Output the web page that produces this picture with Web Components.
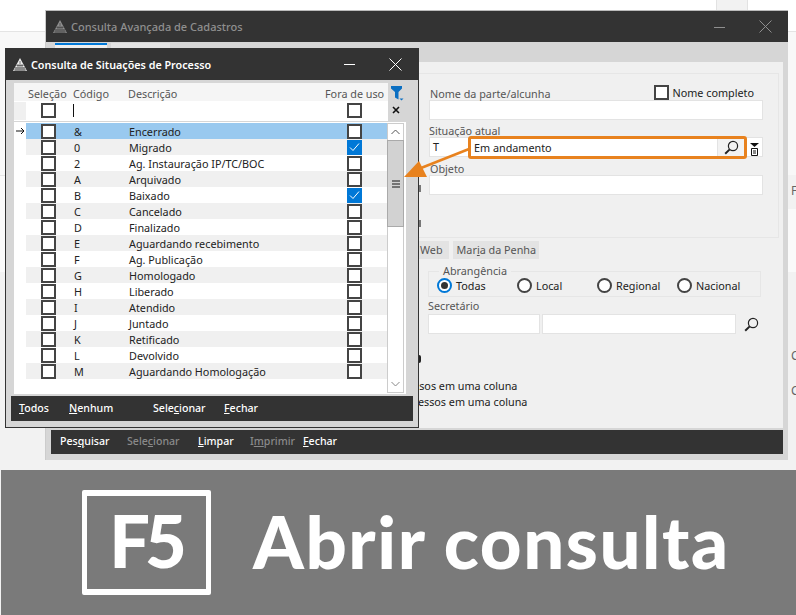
<!DOCTYPE html>
<html lang="pt"><head><meta charset="utf-8"><title>Abrir consulta</title>
<style>
html,body{margin:0;padding:0}
body{width:796px;height:615px;overflow:hidden;background:#fff;position:relative;font:10.8px "Noto Sans",sans-serif;color:#222}
</style></head><body>
<x-app></x-app>
<script>
const LOGO=c=>`<svg width="14" height="13" viewBox="0 0 14 13" style="display:block"><path d="M7 0 14 13H0Z" fill="${c}"/><path d="M7 3V13M5 6V13M9 6V13M3 9V13M11 9V13M3.500 7.500H10.500M2.200 10H11.800M1 12H13" stroke="#444" stroke-width=".7" fill="none"/></svg>`;
const LENS=`<svg width="15" height="15" viewBox="0 0 15 15" style="display:block"><circle cx="9" cy="6" r="4.6" fill="none" stroke="#222" stroke-width="1.2"/><path d="M5.700 9.400 1.200 13.800" stroke="#222" stroke-width="2" fill="none"/></svg>`;

class XCheck extends HTMLElement{
  connectedCallback(){
    const on=this.hasAttribute('checked');
    this.attachShadow({mode:'open'}).innerHTML=`<style>
    :host{display:block;width:15px;height:15px;box-sizing:border-box;border:2px solid ${on?'#0078d7':'#444'};background:${on?'#0078d7':'#fff'}}
    svg{display:block}</style>${on?'<svg width="11" height="11" viewBox="0 0 11 11"><path d="M1 5.500 4 8.500 10 1.500" fill="none" stroke="#fff" stroke-width="1"/></svg>':''}`;
  }
}
class XRadio extends HTMLElement{
  connectedCallback(){
    const on=this.hasAttribute('checked');
    this.attachShadow({mode:'open'}).innerHTML=`<style>
    :host{display:flex;align-items:center;gap:4px;width:80px;height:16px;color:#222}
    i{display:block;width:15px;height:15px;box-sizing:border-box;border-radius:50%;border:2px solid ${on?'#0078d7':'#444'};background:#fff;flex:none}
    b{display:${on?'block':'none'};width:7px;height:7px;border-radius:50%;background:#333;margin:2px}
    </style><i><b></b></i><span><slot></slot></span>`;
  }
}
class XWindow extends HTMLElement{
  connectedCallback(){
    const back=this.hasAttribute('inactive');
    const col=back?'#8f8f8f':'#fff';
    this.attachShadow({mode:'open'}).innerHTML=`<style>
    :host{display:flex;flex-direction:column;position:absolute;box-sizing:border-box;background:#d6d6d6}
    header{flex:none;display:flex;align-items:center;background:#333;color:${col};height:${back?31:32}px;font-weight:${back?500:600};font-size:${back?11:10.75}px}
    .logo{margin:0 4px 0 7px;flex:none}
    .t{flex:1;white-space:nowrap;padding-top:${back?0:2}px}
    .c{flex:none;display:flex;align-items:center;gap:34px;padding-right:16px}
    svg{display:block}
    main{flex:1;display:flex;flex-direction:column;min-height:0}
    </style><header><span class="logo">${LOGO(back?'#8f8f8f':'#eee')}</span><span class="t"><slot name="title"></slot></span>
    <span class="c"><svg width="11" height="12" viewBox="0 0 11 12"><path d="M0 6.500H11" stroke="${col}"/></svg>
    <svg width="13" height="13" viewBox="0 0 13 13"><path d="M.5.5 12.500 12.500M12.500.5.5 12.500" stroke="${col}" stroke-width="1"/></svg></span></header><main><slot></slot></main>`;
  }
}
class XBar extends HTMLElement{
  connectedCallback(){
    this.attachShadow({mode:'open'}).innerHTML=`<style>
    :host{display:flex;align-items:center;background:#333;color:#fff;font-weight:500;font-size:10.6px;white-space:nowrap;padding-bottom:2px;box-sizing:border-box}
    </style><slot></slot>`;
  }
}
class XField extends HTMLElement{
  connectedCallback(){
    this.attachShadow({mode:'open'}).innerHTML=`<style>
    :host{display:block;box-sizing:border-box;background:#fff;border:1px solid #e3e3e3;height:20px;line-height:18px;padding-left:3px;color:#222;white-space:nowrap}
    </style><slot></slot>`;
  }
}
class XGrid extends HTMLElement{
  connectedCallback(){
    const rows=[['&','Encerrado'],['0','Migrado',1],['2','Ag. Instauração IP/TC/BOC'],['A','Arquivado'],['B','Baixado',1],['C','Cancelado'],['D','Finalizado'],['E','Aguardando recebimento'],['F','Ag. Publicação'],['G','Homologado'],['H','Liberado'],['I','Atendido'],['J','Juntado'],['K','Retificado'],['L','Devolvido'],['M','Aguardando Homologação']];
    const html=rows.map((r,i)=>`<div class="row ${i==0?'sel':i%2?'alt':''}"><span class="ind">${i==0?'<svg width="9" height="8" viewBox="0 0 9 8"><path d="M0 4H8M5 1 8 4 5 7" fill="none" stroke="#111"/></svg>':''}</span><span class="c1"><x-check></x-check></span><span class="c2">${r[0]}</span><span class="c3">${r[1]}</span><span class="c4"><x-check ${r[2]?'checked':''}></x-check></span></div>`).join('');
    this.attachShadow({mode:'open'}).innerHTML=`<style>
    :host{display:flex;flex-direction:column;flex:none;color:#222}
    .top{display:flex;height:38px}
    .hd{width:374px;background:#fff;box-sizing:border-box}
    .hdr{display:flex;align-items:center;height:18px;background:#f5f5f5;color:#555;padding-top:2px;box-sizing:border-box;white-space:nowrap}
    .filter{display:flex;align-items:center;height:19px}
    .stub{width:12px;height:18px;background:#f0f0f0;flex:none}
    .caret{width:1px;height:13px;background:#111;flex:none}
    .tools{flex:none;display:flex;flex-direction:column;align-items:center;width:18px}
    .main{display:flex;width:392px;height:272px;background:#fff;margin-top:1px;box-sizing:border-box;padding-top:1px}
    .list{width:373px;flex:none}
    .row{display:flex;align-items:center;height:16px;white-space:nowrap}
    .row.alt{background:linear-gradient(90deg,#fff 12px,#f0f0f0 12px)}
    .row.sel{background:linear-gradient(90deg,#fff 12px,#99c9ef 12px)}
    .ind{width:12px;flex:none;display:flex;justify-content:center}
    .c1{width:48px;flex:none;padding-left:15px;box-sizing:border-box}
    .c2{width:55px;flex:none}
    .c3{width:218px;flex:none}
    .c4{flex:none}
    .sb{width:17px;flex:none;height:270px;display:flex;flex-direction:column;border:1px solid #ccc;box-sizing:border-box;background:#fff}
    .btn{height:16px;flex:none;display:flex;align-items:center;justify-content:center;background:#fff}
    .th{height:87px;flex:none;background:#d2d2d2;border:1px solid #aaa;box-sizing:border-box;margin:0 -1px;display:flex;align-items:center;justify-content:center}
    .sp{flex:1}
    .h1{width:59px;padding-left:14px;box-sizing:border-box}.h2{width:55px}.h3{width:197px}.h4{flex:1}
    </style>
    <div class="top"><div class="hd">
      <div class="hdr"><span class="h1">Seleção</span><span class="h2">Código</span><span class="h3">Descrição</span><span class="h4">Fora de uso</span></div>
      <div class="filter"><span class="stub"></span><span style="width:15px;flex:none"></span><x-check></x-check><span style="width:17px;flex:none"></span><span class="caret"></span><span style="width:273px;flex:none"></span><x-check></x-check></div>
    </div><div class="tools">
      <svg width="13" height="15" viewBox="0 0 13 15" style="margin-top:3px;display:block"><path d="M0 0H11V2.500L7.500 6V13.500L4 11.500V6L0 2.500Z" fill="#0b6fc2"/><path d="M8.500 12.500H12.500L10.500 14.500Z" fill="#0b6fc2"/></svg>
      <svg width="8" height="8" viewBox="0 0 8 8" style="margin:5px 2px 0 0;display:block"><path d="M1 1 7 7M7 1 1 7" stroke="#111" stroke-width="1.6"/></svg>
    </div></div>
    <div class="main"><div class="list">${html}</div>
    <div class="sb"><div class="btn"><svg width="9" height="6" viewBox="0 0 9 6"><path d="M.5 5 4.500 1 8.500 5" fill="none" stroke="#555"/></svg></div>
    <div class="th"><svg width="8" height="8" viewBox="0 0 8 8"><path d="M0 1H8M0 4H8M0 7H8" stroke="#555" stroke-width="1.3"/></svg></div><div class="sp"></div>
    <div class="btn"><svg width="9" height="6" viewBox="0 0 9 6"><path d="M.5 1 4.500 5 8.500 1" fill="none" stroke="#888"/></svg></div></div></div>`;
  }
}
class XForm extends HTMLElement{
  connectedCallback(){
    this.attachShadow({mode:'open'}).innerHTML=`<style>
    :host{display:block;flex:1;background:#f0f0f0;color:#555;position:relative;overflow:hidden;margin:20px 5px 2px 0}
    .group{margin:11px 4px 0 0;height:165px;border:1px solid #e6e6e6;border-left:0;box-sizing:border-box;padding:0 15px 0 383px}
    .lbl{white-space:nowrap}
    .r1{display:flex;justify-content:space-between;align-items:flex-end;height:26px}
    .nc{display:flex;align-items:center;gap:4px;color:#222;margin-right:9px;line-height:13px}
    .tabs{display:flex;gap:4px;padding-left:345px;margin-top:3px;height:18px;line-height:17px;white-space:nowrap}
    .tabs span{background:#e3e3e3;box-sizing:border-box}
    .tabs .w{padding:0 6px 0 29px}.tabs .m{padding:0 4px;width:86px}
    .fs{margin:12px 0 0 382px;width:333px;height:26px;box-sizing:border-box;border:1px solid #e6e6e6;padding:2px 0 0 8px;display:flex;position:relative;align-items:center}
    .fs em{position:absolute;left:10px;top:-9px;background:#f0f0f0;padding:0 4px;font-style:normal;line-height:15px;height:15px}
    .lines{margin:44px 0 0 368px;color:#222;white-space:nowrap;line-height:16px}
    .tick{position:absolute;left:373px;width:2px;background:#777}
    </style>
    <div class="group">
      <div class="r1"><span class="lbl" style="padding-left:1px;line-height:21px;height:17px">Nome da parte/alcunha</span><span class="nc"><x-check></x-check><span>Nome completo</span></span></div>
      <x-field></x-field>
      <div class="lbl" style="margin-top:1px;height:16px;line-height:20px">Situação atual</div>
      <div style="display:flex;height:20px"><x-field style="flex:1;color:#222">T</x-field></div>
      <div class="lbl" style="height:18px;line-height:24px;padding-left:1px">Objeto</div>
      <x-field></x-field>
    </div>
    <div class="tabs"><span class="w">Web</span><span class="m">Mar<u>i</u>a da Penha</span></div>
    <div class="fs"><em>Abrangência</em><x-radio checked>Todas</x-radio><x-radio>Local</x-radio><x-radio>Regional</x-radio><x-radio>Nacional</x-radio></div>
    <div style="margin:1px 0 0 382px;height:16px;line-height:15px">Secretário</div>
    <div style="margin-left:382px;display:flex;gap:2px;align-items:center;height:20px"><x-field style="width:112px"></x-field><x-field style="width:194px"></x-field><span style="margin-left:6px">${LENS}</span></div>
    <div class="lines"><div>ssos em uma coluna</div><div>tessos em uma coluna</div></div>
    <i class="tick" style="top:123px;height:7px"></i><i class="tick" style="top:158px;height:7px"></i>
    <i class="tick" style="top:293px;height:8px;background:#222;border-radius:0 3px 3px 0"></i>`;
  }
}
class XApp extends HTMLElement{
  connectedCallback(){
    this.attachShadow({mode:'open'}).innerHTML=`<style>
    :host{display:flex;flex-direction:column;width:796px;height:615px;font:10.8px "Noto Sans",sans-serif;background:#f2f2f2;position:relative;overflow:hidden}
    .top{height:470px;flex:none;position:relative;background:linear-gradient(#fff 0 31px,#e4e4e4 31px 32px,#f8f8f8 32px 175px,#e6e6e6 175px 176px,#fafafa 176px 272px,#f2f2f2 272px)}
    .stub{position:absolute;left:716px;top:0;width:32px;height:11px;background:#f2f2f2;border:1px solid #e2e2e2;border-top:0;box-sizing:border-box}
    .side{position:absolute;left:788px;top:175px;width:8px;height:34px;background:#f2f2f2;color:#666;font-size:12px;line-height:32px;white-space:nowrap;overflow:hidden;padding-left:3px;box-sizing:border-box}
    .sc{position:absolute;left:791px;width:5px;overflow:hidden;color:#666;font-size:12px;line-height:14px}
    .banner{flex:1;margin-left:1px;background:#7a7a7a;color:#fff;display:flex;align-items:center;padding-left:81px}
    .key{box-sizing:border-box;width:129px;height:105px;border:solid #fff;border-width:6px 5px;border-radius:2px;padding:0 2px 6px 0;display:flex;align-items:center;justify-content:center;font:900 72px/1 Lato,sans-serif;letter-spacing:-5px}
    .ttl{font:900 72.500px/1 Lato,sans-serif;margin:0 0 2px 42px;white-space:nowrap;letter-spacing:1.550px}
    .hl{position:absolute;left:468px;top:136px;width:279px;height:23px;box-sizing:border-box;border:3px solid #e8821e;border-radius:3px;background:#fff;display:flex;align-items:center;color:#222;padding-left:3px;line-height:15px}
    .hl span{flex:1;padding-bottom:1px}
    .hl i{flex:none;width:26px;height:17px;background:#f2f2f2;border-left:1px solid #e3e3e3;display:flex;align-items:center;justify-content:center}
    </style>
    <div class="top">
      <div class="stub"></div>
      <div class="side">F</div><div class="sc" style="top:349px">C</div><div class="sc" style="top:384px">C</div>
      <x-window inactive style="left:45px;top:10px;width:743px;height:450px;border-top:1px solid #bbb;border-left:1px solid #ccc">
        <span slot="title">Consulta Avançada de Cadastros</span>
        <div style="position:absolute;left:9px;top:32px;width:52px;height:20px;background:#f0f0f0;border-top:2px solid #0078d7;box-sizing:border-box"></div>
        <div style="position:absolute;left:65px;top:32px;width:59px;height:20px;background:#e3e3e3"></div>
        <x-form></x-form>
        <x-bar style="height:24px;margin:0 5px 6px 5px;flex:none;padding-left:9px">
          <span style="width:67px">Pes<u>q</u>uisar</span><span style="width:71px;color:#8a8a8a">Sele<u>c</u>ionar</span><span style="width:52px"><u>L</u>impar</span><span style="width:53px;color:#8a8a8a">I<u>m</u>primir</span><span><u>F</u>echar</span>
        </x-bar>
      </x-window>
      <div class="hl"><span>Em andamento</span><i>${LENS}</i></div>
      <svg style="position:absolute;left:750px;top:143px" width="9" height="13" viewBox="0 0 9 13"><path d="M0 0H9L4.500 4Z" fill="#111"/><path d="M1.500 5.500H7.500V12.500H1.500ZM3 8H6M3 10H6" fill="#fff" stroke="#111"/></svg>
      <x-window style="left:5px;top:48px;width:414px;height:380px;border:1px solid #333;border-top:0">
        <span slot="title">Consulta de Situações de Processo</span>
        <x-grid style="margin:3px 0 0 8px"></x-grid>
        <x-bar style="height:25px;margin:2px 5px 0 5px;padding-left:8px;flex:none">
          <span style="width:50px"><u>T</u>odos</span><span style="width:84px"><u>N</u>enhum</span><span style="width:71px">Sele<u>c</u>ionar</span><span><u>F</u>echar</span>
        </x-bar>
      </x-window>
      <svg style="position:absolute;left:400px;top:145px" width="75" height="40" viewBox="0 0 75 40"><path d="M69 4 16 25" stroke="#e8821e" stroke-width="2.500" fill="none"/><path d="M4 32 19 16 27 32Z" fill="#e8821e"/></svg>
    </div>
    <div class="banner"><div class="key">F5</div><div class="ttl">Abrir consulta</div></div>`;
  }
}
customElements.define('x-check',XCheck);
customElements.define('x-radio',XRadio);
customElements.define('x-window',XWindow);
customElements.define('x-bar',XBar);
customElements.define('x-field',XField);
customElements.define('x-grid',XGrid);
customElements.define('x-form',XForm);
customElements.define('x-app',XApp);
</script>
</body></html>
